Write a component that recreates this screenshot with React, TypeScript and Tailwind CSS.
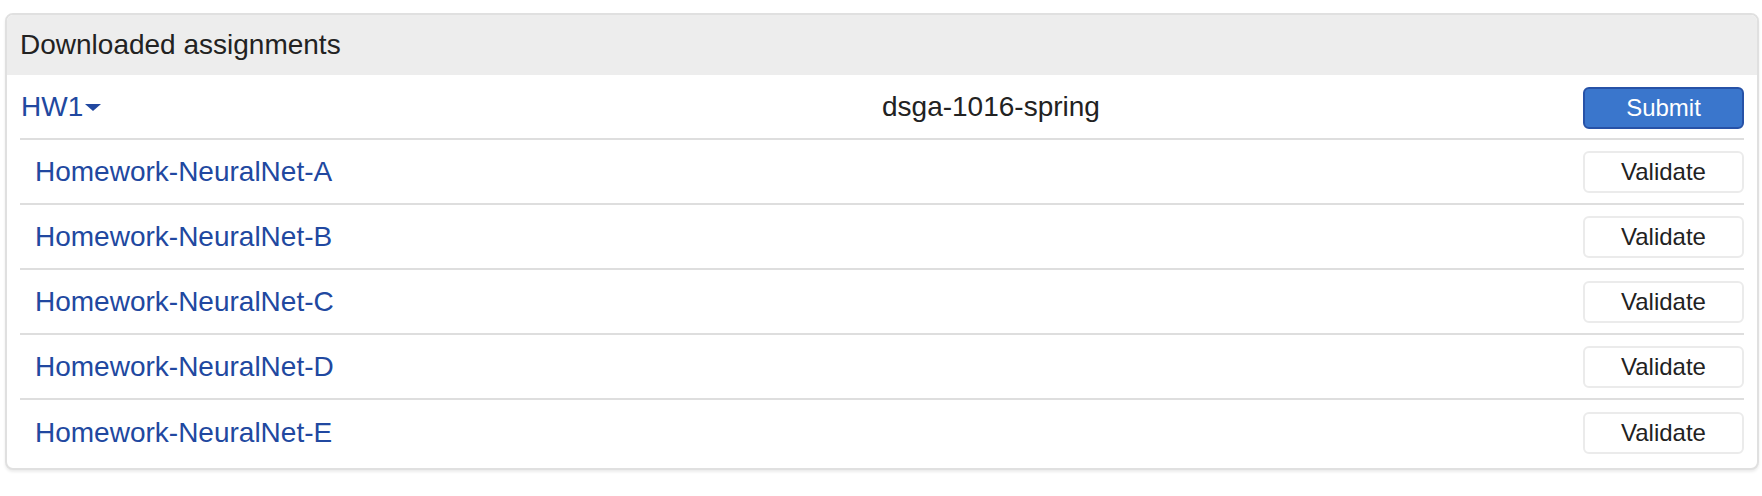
const assignments = ["A", "B", "C", "D", "E"].map((s) => `Homework-NeuralNet-${s}`);

function Caret() {
  return (
    <svg width="16" height="8" viewBox="0 0 16 8" className="ml-[2px] mt-[2px] shrink-0">
      <path d="M0 0 L16 0 L8 7 Z" fill="#2148a0" />
    </svg>
  );
}

export default function App() {
  return (
    <div className="min-h-[496px] bg-white pt-[13px] pl-[5px] font-['Liberation_Sans',Arial,sans-serif] text-[28px] text-[#222]">
      <div className="w-[1754px] rounded-[8px] border-2 border-[#e0e0e0] bg-white shadow-[0_2px_3px_rgba(0,0,0,0.08)] overflow-hidden">
        {/* Header */}
        <div className="flex h-[60px] items-center bg-[#ededed] pl-[13px]">
          Downloaded assignments
        </div>

        <div className="px-[13px] pb-[3px]">
          {/* Assignment row */}
          <div className="grid h-[65px] grid-cols-2 items-center border-b-2 border-[#dedede]">
            <div className="flex items-center pl-[1px] text-[#2148a0]">
              HW1
              <Caret />
            </div>
            <div className="flex items-center justify-between">
              <span>dsga-1016-spring</span>
              <button className="mt-[3px] h-[42px] w-[161px] rounded-[6px] border-2 border-[#2752a7] bg-[#3a76cc] text-[24px] text-white">
                Submit
              </button>
            </div>
          </div>

          {/* Notebooks */}
          {assignments.map((name, i) => (
            <div
              key={name}
              className={`flex h-[65px] items-center justify-between ${
                i < assignments.length - 1 ? "border-b-2 border-[#dedede]" : ""
              }`}
            >
              <span className="pl-[15px] text-[#2148a0]">{name}</span>
              <button className="h-[42px] w-[161px] rounded-[6px] border-2 border-[#ebebeb] bg-white text-[24px] text-[#222]">
                Validate
              </button>
            </div>
          ))}
        </div>
      </div>
    </div>
  );
}
